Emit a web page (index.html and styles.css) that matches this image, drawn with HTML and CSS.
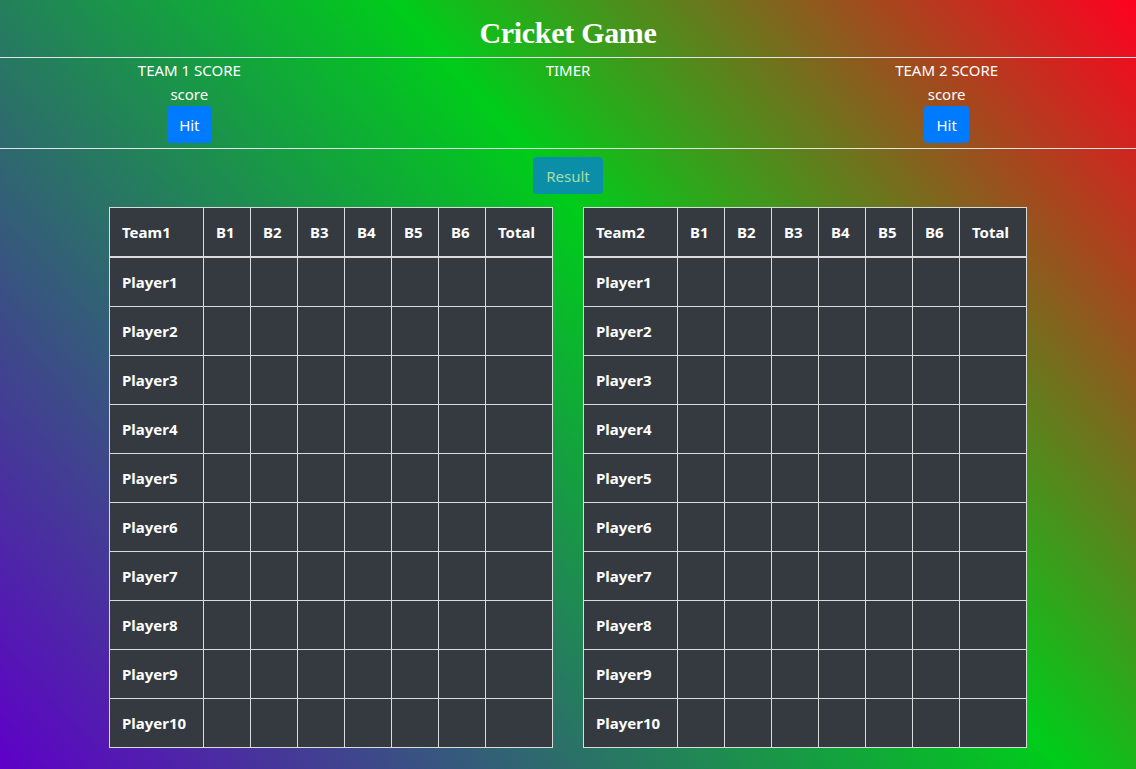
FILE: index.html
```html
<!DOCTYPE html>
<html lang="en">
<head>
<meta charset="utf-8">
<title>Cricket Game</title>
<link rel="stylesheet" href="styles.css">
</head>
<body>
<h1 class="title">Cricket Game</h1>
<hr class="rule">
<div class="scores">
  <div class="score-col">
    <div class="label">TEAM 1 SCORE</div>
    <div class="label">score</div>
    <button class="btn btn-hit">Hit</button>
  </div>
  <div class="score-col">
    <div class="label">TIMER</div>
  </div>
  <div class="score-col">
    <div class="label">TEAM 2 SCORE</div>
    <div class="label">score</div>
    <button class="btn btn-hit">Hit</button>
  </div>
</div>
<hr class="rule rule-2">
<div class="result-row">
  <button class="btn btn-result">Result</button>
</div>
<div class="tables">
  <table class="board">
    <colgroup><col class="c-name"><col class="c-ball"><col class="c-ball"><col class="c-ball"><col class="c-ball"><col class="c-ball"><col class="c-ball"><col class="c-total"></colgroup>
    <thead><tr><th>Team1</th><th>B1</th><th>B2</th><th>B3</th><th>B4</th><th>B5</th><th>B6</th><th>Total</th></tr></thead>
    <tbody>
      <tr><th>Player1</th><td></td><td></td><td></td><td></td><td></td><td></td><td></td></tr>
      <tr><th>Player2</th><td></td><td></td><td></td><td></td><td></td><td></td><td></td></tr>
      <tr><th>Player3</th><td></td><td></td><td></td><td></td><td></td><td></td><td></td></tr>
      <tr><th>Player4</th><td></td><td></td><td></td><td></td><td></td><td></td><td></td></tr>
      <tr><th>Player5</th><td></td><td></td><td></td><td></td><td></td><td></td><td></td></tr>
      <tr><th>Player6</th><td></td><td></td><td></td><td></td><td></td><td></td><td></td></tr>
      <tr><th>Player7</th><td></td><td></td><td></td><td></td><td></td><td></td><td></td></tr>
      <tr><th>Player8</th><td></td><td></td><td></td><td></td><td></td><td></td><td></td></tr>
      <tr><th>Player9</th><td></td><td></td><td></td><td></td><td></td><td></td><td></td></tr>
      <tr><th>Player10</th><td></td><td></td><td></td><td></td><td></td><td></td><td></td></tr>
    </tbody>
  </table>
  <table class="board">
    <colgroup><col class="c-name"><col class="c-ball"><col class="c-ball"><col class="c-ball"><col class="c-ball"><col class="c-ball"><col class="c-ball"><col class="c-total"></colgroup>
    <thead><tr><th>Team2</th><th>B1</th><th>B2</th><th>B3</th><th>B4</th><th>B5</th><th>B6</th><th>Total</th></tr></thead>
    <tbody>
      <tr><th>Player1</th><td></td><td></td><td></td><td></td><td></td><td></td><td></td></tr>
      <tr><th>Player2</th><td></td><td></td><td></td><td></td><td></td><td></td><td></td></tr>
      <tr><th>Player3</th><td></td><td></td><td></td><td></td><td></td><td></td><td></td></tr>
      <tr><th>Player4</th><td></td><td></td><td></td><td></td><td></td><td></td><td></td></tr>
      <tr><th>Player5</th><td></td><td></td><td></td><td></td><td></td><td></td><td></td></tr>
      <tr><th>Player6</th><td></td><td></td><td></td><td></td><td></td><td></td><td></td></tr>
      <tr><th>Player7</th><td></td><td></td><td></td><td></td><td></td><td></td><td></td></tr>
      <tr><th>Player8</th><td></td><td></td><td></td><td></td><td></td><td></td><td></td></tr>
      <tr><th>Player9</th><td></td><td></td><td></td><td></td><td></td><td></td><td></td></tr>
      <tr><th>Player10</th><td></td><td></td><td></td><td></td><td></td><td></td><td></td></tr>
    </tbody>
  </table>
</div>
</body>
</html>
```
FILE: styles.css
```css
html, body {
  margin: 0;
  padding: 0;
}
body {
  min-height: 100vh;
  font-family: "Noto Sans", "Open Sans", sans-serif;
  font-size: 15px;
  line-height: 24px;
  color: #fff;
  background: linear-gradient(49deg, #5f00c8 0%, #00cc1a 59%, #ff0020 100%);
  background-attachment: fixed;
}
.title {
  margin: 0;
  padding-top: 15px;
  height: 35px;
  font-family: "Liberation Serif", "DejaVu Serif", serif;
  font-weight: bold;
  font-size: 30px;
  line-height: 36px;
  text-align: center;
  letter-spacing: -0.3px;
}
.rule {
  margin: 7px 0 0;
  border: 0;
  height: 1px;
  background: #e4e4e4;
}
.rule-2 {
  margin-top: 5px;
}
.scores {
  display: grid;
  grid-template-columns: 1fr 1fr 1fr;
  text-align: center;
}
.score-col {
  display: flex;
  flex-direction: column;
  align-items: center;
}
.label {
  height: 24px;
}
.btn {
  font-family: "Noto Sans", "Open Sans", sans-serif;
  font-size: 15px;
  line-height: 24px;
  border: 0;
  border-radius: 4px;
  padding: 7px 12px 6px;
  cursor: pointer;
}
.btn-hit {
  background: #007bff;
  color: #fff;
}
.result-row {
  display: flex;
  justify-content: center;
  padding-top: 8px;
}
.btn-result {
  background: #0b8fa9;
  color: #a6dca6;
  padding: 7px 13px 6px;
}
.tables {
  display: flex;
  justify-content: center;
  gap: 30px;
  margin-top: 13px;
  padding-bottom: 20px;
}
.board {
  border-collapse: collapse;
  table-layout: fixed;
  width: 443px;
  background: #343a40;
  border: 1px solid #d9dbdd;
}
.c-name { width: 94px; }
.c-ball { width: 47px; }
.c-total { width: 67px; }
.board th, .board td {
  border: 1px solid #d9dbdd;
  padding: 12px;
  height: 24px;
  text-align: left;
  font-weight: bold;
  font-size: 15px;
  line-height: 24px;
  color: #fff;
  white-space: nowrap;
}
.board thead th {
  border-bottom: 2px solid #d9dbdd;
}
```
